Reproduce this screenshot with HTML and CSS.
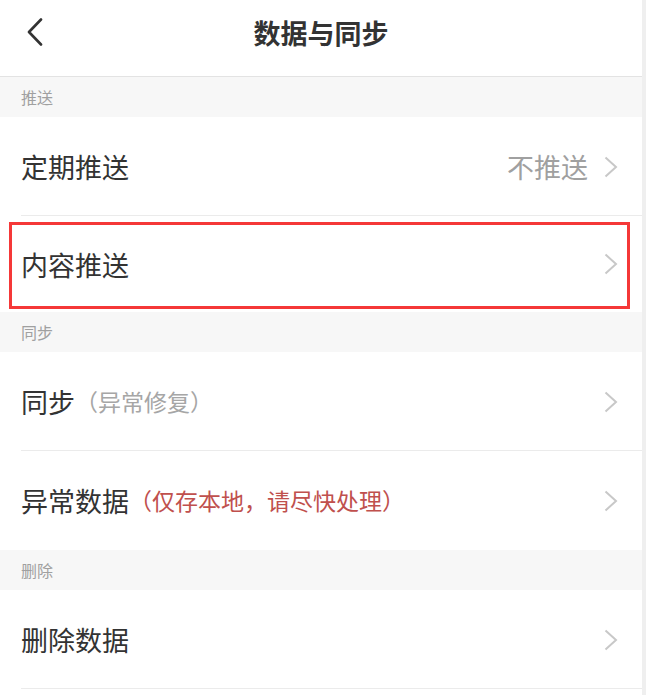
FILE: index.html
```html
<!DOCTYPE html>
<html lang="zh-CN">
<head>
<meta charset="utf-8">
<title>数据与同步</title>
<link rel="stylesheet" href="styles.css">
</head>
<body>
<div class="page">
  <header class="header">
    <div class="header-bar">
      <svg class="back" width="18" height="28" viewBox="0 0 18 28"><path d="M15 1.5 L3 14 L15 26.5" fill="none" stroke="#333" stroke-width="2.6" stroke-linecap="round" stroke-linejoin="round"/></svg>
      <h1 class="title">数据与同步</h1>
    </div>
  </header>

  <div class="section">推送</div>
  <div class="row divided">
    <span class="label">定期推送</span>
    <span class="value">不推送</span>
    <svg class="chev" width="14" height="22" viewBox="0 0 14 22"><path d="M1.5 1.5 L12 11 L1.5 20.5" fill="none" stroke="#c8c8c8" stroke-width="2"/></svg>
  </div>
  <div class="row highlighted">
    <span class="label">内容推送</span>
    <svg class="chev" width="14" height="22" viewBox="0 0 14 22"><path d="M1.5 1.5 L12 11 L1.5 20.5" fill="none" stroke="#c8c8c8" stroke-width="2"/></svg>
    <div class="mark"></div>
  </div>

  <div class="section">同步</div>
  <div class="row divided">
    <span class="label">同步<span class="note">（异常修复）</span></span>
    <svg class="chev" width="14" height="22" viewBox="0 0 14 22"><path d="M1.5 1.5 L12 11 L1.5 20.5" fill="none" stroke="#c8c8c8" stroke-width="2"/></svg>
  </div>
  <div class="row">
    <span class="label">异常数据<span class="note warn">（仅存本地，请尽快处理）</span></span>
    <svg class="chev" width="14" height="22" viewBox="0 0 14 22"><path d="M1.5 1.5 L12 11 L1.5 20.5" fill="none" stroke="#c8c8c8" stroke-width="2"/></svg>
  </div>

  <div class="section">删除</div>
  <div class="row divided">
    <span class="label">删除数据</span>
    <svg class="chev" width="14" height="22" viewBox="0 0 14 22"><path d="M1.5 1.5 L12 11 L1.5 20.5" fill="none" stroke="#c8c8c8" stroke-width="2"/></svg>
  </div>
</div>
</body>
</html>
```

FILE: styles.css
```css
html, body {
  margin: 0;
  padding: 0;
}
body {
  background: #efefef;
  font-family: "Noto Sans CJK SC", "Noto Sans", sans-serif;
  color: #333;
}
.page {
  width: 642px;
  min-height: 100vh;
  background: #fff;
}
.header {
  height: 76px;
  border-bottom: 1px solid #e3e3e3;
  box-sizing: content-box;
}
.header-bar {
  position: relative;
  height: 64px;
  display: flex;
  align-items: center;
  justify-content: center;
}
.back {
  position: absolute;
  left: 26px;
  top: 18px;
}
.title {
  margin: 0;
  font-size: 27px;
  font-weight: 700;
  color: #333;
  line-height: 1;
}
.section {
  height: 40px;
  background: #f7f7f7;
  display: flex;
  align-items: center;
  padding-left: 21px;
  font-size: 16px;
  color: #a0a0a0;
}
.row {
  position: relative;
  height: 99px;
  box-sizing: border-box;
  display: flex;
  align-items: center;
  padding: 0 24px 0 21px;
}
.row.divided::after {
  content: "";
  position: absolute;
  left: 21px;
  right: 0;
  bottom: 0;
  height: 1px;
  background: #ebebeb;
}
.label {
  flex: 1;
  font-size: 27px;
  color: #333;
  line-height: 1;
  display: flex;
  align-items: center;
}
.note {
  font-size: 23px;
  color: #a6a6a6;
}
.note.warn {
  color: #c0504d;
}
.value {
  font-size: 27px;
  color: #a0a0a0;
  line-height: 1;
  margin-right: 16px;
}
.chev {
  display: block;
  flex: none;
}
.highlighted {
  height: 96px;
}
.mark {
  position: absolute;
  left: 9px;
  top: 6px;
  width: 621px;
  height: 87px;
  box-sizing: border-box;
  border: 3px solid #f53838;
  pointer-events: none;
}
```
